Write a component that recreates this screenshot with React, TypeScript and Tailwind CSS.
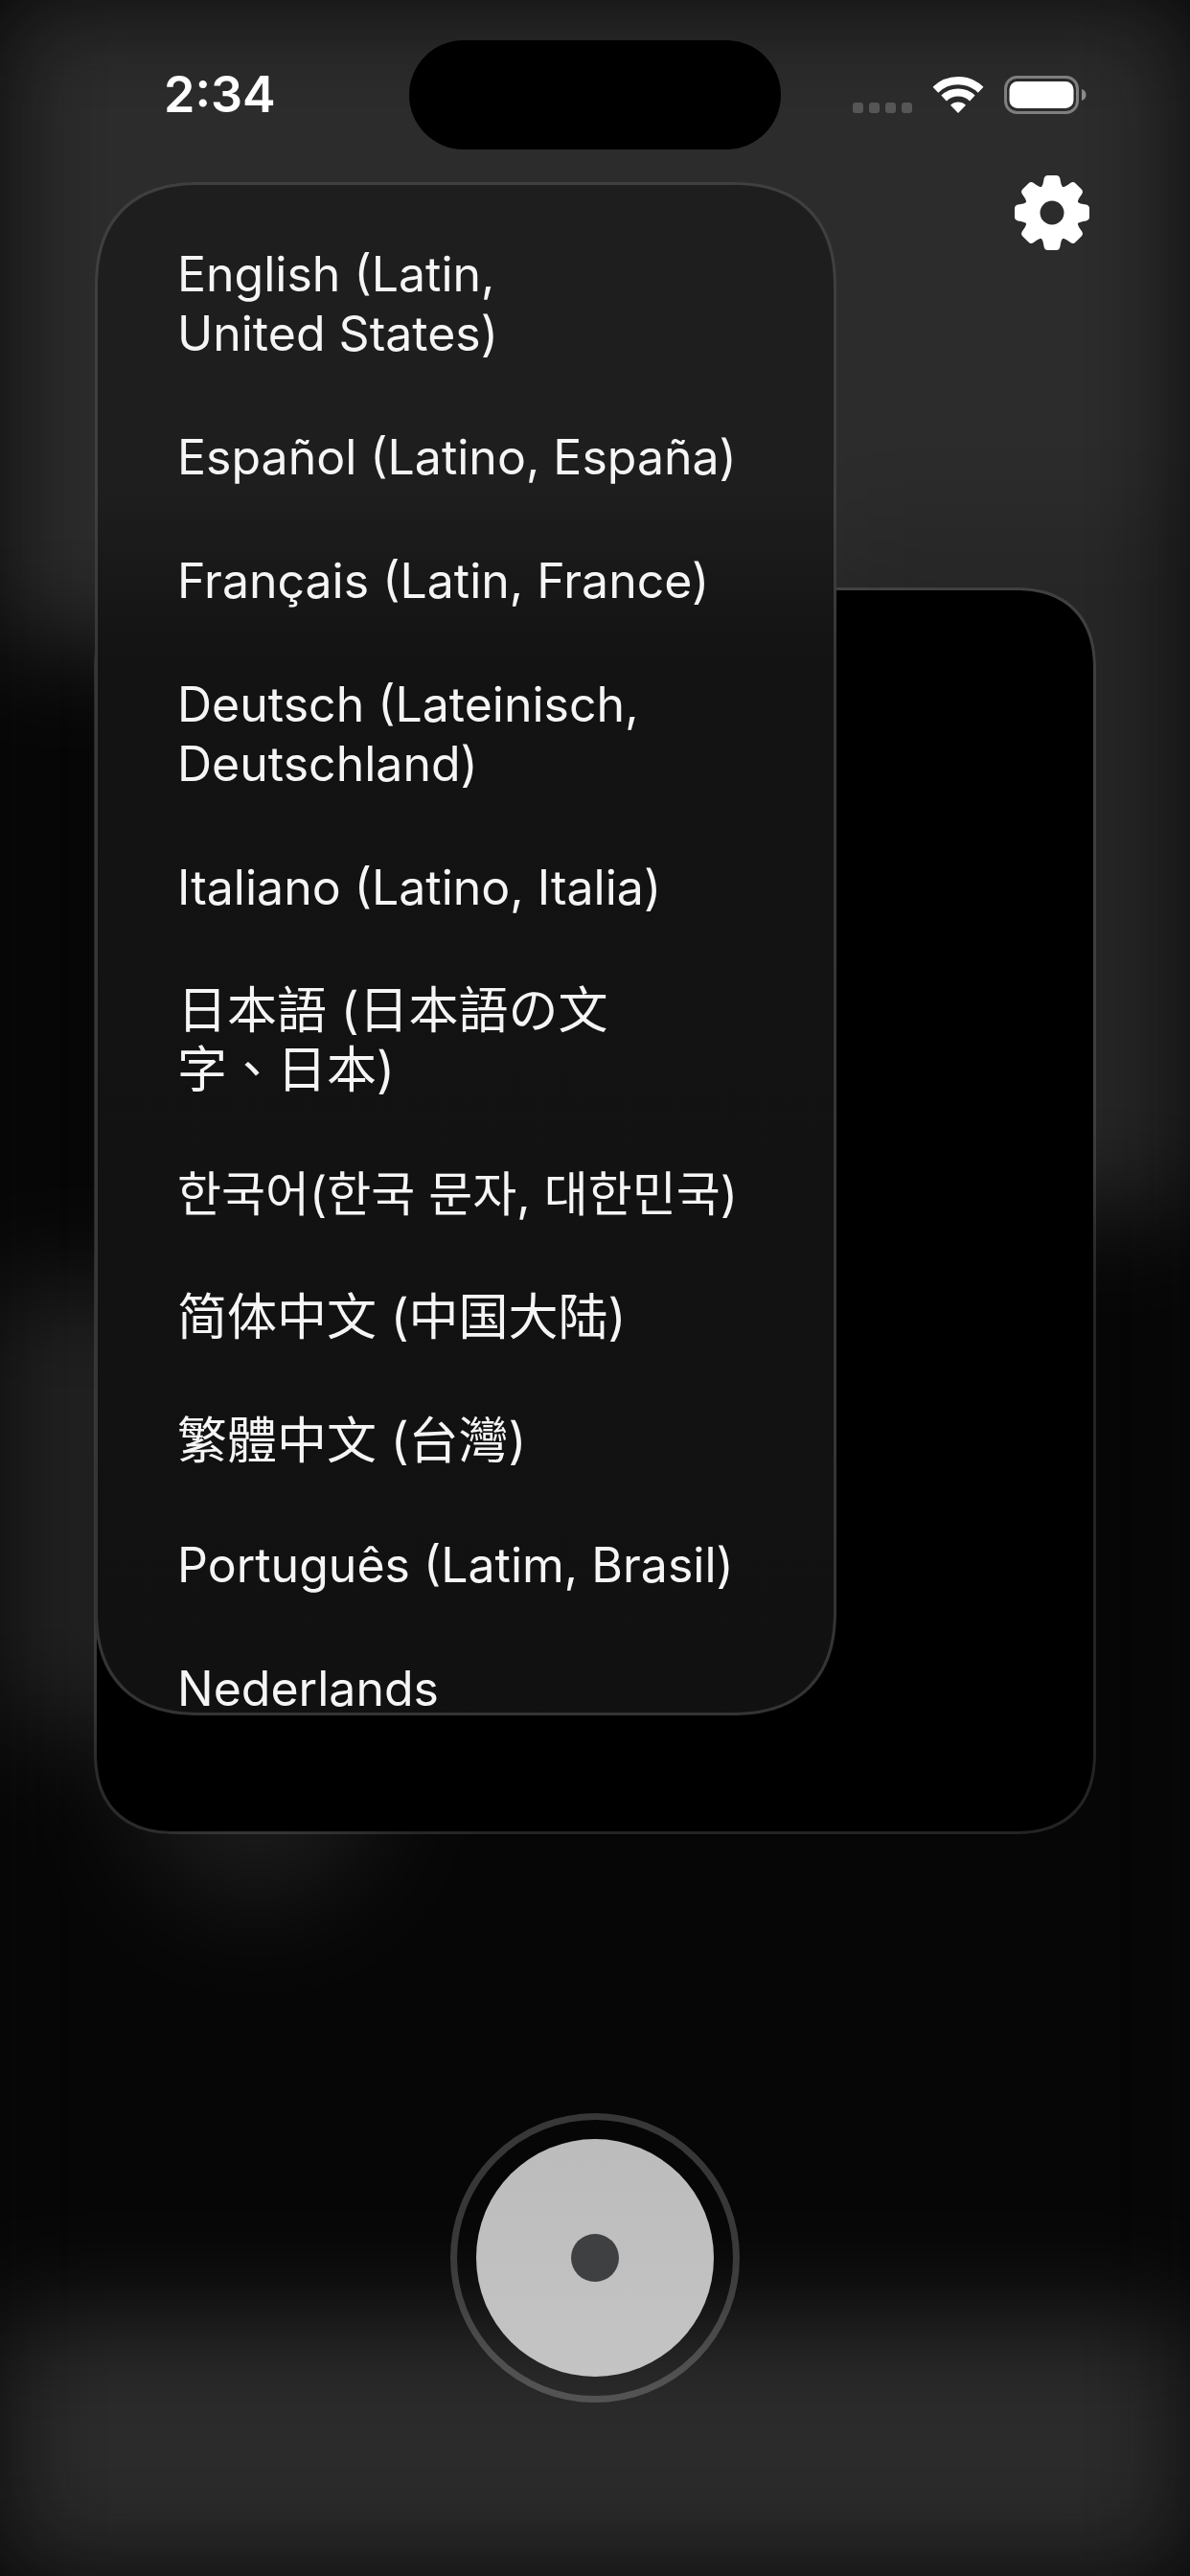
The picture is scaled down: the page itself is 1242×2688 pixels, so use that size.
import { useState } from 'react';

const languages = [
  { code: 'en-US', label: 'English (Latin,\nUnited States)' },
  { code: 'es-ES', label: 'Español (Latino, España)' },
  { code: 'fr-FR', label: 'Français (Latin, France)' },
  { code: 'de-DE', label: 'Deutsch (Lateinisch,\nDeutschland)' },
  { code: 'it-IT', label: 'Italiano (Latino, Italia)' },
  { code: 'ja-JP', label: '日本語 (日本語の文\n字、日本)', han: true },
  { code: 'ko-KR', label: '한국어(한국 문자, 대한민국)' },
  { code: 'zh-CN', label: '简体中文 (中国大陆)', han: true },
  { code: 'zh-TW', label: '繁體中文 (台灣)', han: true },
  { code: 'pt-BR', label: 'Português (Latim, Brasil)' },
  { code: 'nl-NL', label: 'Nederlands' },
];

const teeth = [0, 45, 90, 135, 180, 225, 270, 315];

function GearIcon() {
  return (
    <svg viewBox="-39 -39 78 78" className="size-[78px]" fill="white" aria-hidden="true">
      <circle r="20.7" fill="none" stroke="white" strokeWidth="16.4" />
      {teeth.map((angle) => (
        <path
          key={angle}
          transform={`rotate(${angle})`}
          d="M-12 -26 C-9.5 -28 -9.2 -31 -8.4 -35.5 Q-7.6 -39 -4.5 -39 H4.5 Q7.6 -39 8.4 -35.5 C9.2 -31 9.5 -28 12 -26 Z"
        />
      ))}
    </svg>
  );
}

function WifiIcon() {
  return (
    <svg viewBox="-27 -39 54 40" className="h-10 w-[54px]" aria-hidden="true">
      <g fill="none" stroke="white">
        <path d="M-23.6 -24.3 A33.9 33.9 0 0 1 23.6 -24.3" strokeWidth="8.2" />
        <path d="M-14.9 -15.5 A21.5 21.5 0 0 1 14.9 -15.5" strokeWidth="8" />
      </g>
      <path d="M0 0 L-8 -8.3 A11.8 11.8 0 0 1 8 -8.3 Z" fill="white" />
    </svg>
  );
}

function BatteryIcon() {
  return (
    <svg viewBox="0 0 86 40" className="h-10 w-[86px]" aria-hidden="true">
      <rect x="1.5" y="1.5" width="75" height="37" rx="12" fill="none" stroke="#7f7f7f" strokeWidth="3" />
      <rect x="5.5" y="6" width="67" height="28" rx="8.5" fill="white" />
      <path d="M81 14 Q85.500 15.500 85.500 20 Q85.500 24.500 81 26 Z" fill="#8a8a8a" />
    </svg>
  );
}

function StatusBar() {
  return (
    <header className="grid grid-cols-[1fr_388px_1fr] items-center pt-[42px]">
      <time className="pl-[171px] text-[52px] leading-[62px] font-semibold">2:34</time>
      <div className="h-[114px] rounded-full bg-black" />
      <div className="flex items-center justify-end pr-[108px]">
        <div className="mt-[26px] mr-[21px] flex gap-[6px]">
          <span className="size-[11px] rounded-[3px] bg-[#565656]" />
          <span className="size-[11px] rounded-[3px] bg-[#565656]" />
          <span className="size-[11px] rounded-[3px] bg-[#565656]" />
          <span className="size-[11px] rounded-[3px] bg-[#565656]" />
        </div>
        <WifiIcon />
        <div className="w-[21px]" />
        <BatteryIcon />
      </div>
    </header>
  );
}

// soft light behind the viewfinder, fades out towards the screen edges
function Backdrop() {
  return (
    <div className="absolute inset-0 overflow-hidden" aria-hidden="true">
      <div className="relative h-full bg-[#060606] blur-[55px]">
        <div className="absolute inset-x-0 top-0 h-[25%] bg-[#2c2c2c]" />
        <div className="absolute top-[20%] right-0 h-[27%] w-[30%] bg-[#262626]" />
        <div className="absolute top-[50%] left-0 h-[17%] w-[14%] bg-[#222222]" />
        <div className="absolute top-[63%] left-[11%] h-[11%] w-[21%] rounded-full bg-[#1b1b1b]" />
        <div className="absolute inset-x-0 bottom-0 h-[10%] bg-[#2b2b2b]" />
      </div>
    </div>
  );
}

export default function App() {
  const [selected, setSelected] = useState('en-US');
  const [recording, setRecording] = useState(false);

  return (
    <div className="relative min-h-screen bg-[#080808] text-white font-[Inter,'Noto_Sans_CJK_TC',sans-serif]">
      <Backdrop />
      <div className="relative flex min-h-screen flex-col">
        <StatusBar />
        <div className="relative z-10 mx-[98px] flex justify-end pt-5">
          <ul className="absolute top-[34px] left-px flex max-h-[1600px] w-[74%] flex-col gap-[67px] overflow-x-hidden overflow-y-auto rounded-[110px] border-[3px] border-white/15 bg-linear-to-b from-[#1e1e1e] from-20% via-[#131313] via-31% to-[#111111] bg-origin-border pt-[62px] pl-[83px] [corner-shape:superellipse(1.25)] [scrollbar-width:none]">
            {languages.map((language) => (
              <li key={language.code} lang={language.code}>
                <button
                  onClick={() => setSelected(language.code)}
                  aria-pressed={selected === language.code}
                  className={`block cursor-pointer text-left leading-[62px] whitespace-pre text-[#f5f5f5] ${
                    language.han ? "text-[52px] [font-feature-settings:'locl'_0]" : 'text-[50px]'
                  }`}
                >
                  {language.label}
                </button>
              </li>
            ))}
          </ul>
          <button aria-label="Settings" className="cursor-pointer p-[7px]">
            <GearIcon />
          </button>
        </div>
        <main className="mx-[98px] mt-[345px] flex-1 rounded-[86px] border-[3px] border-white/12 bg-black bg-clip-padding [corner-shape:superellipse(1.25)]" />
        <footer className="flex justify-center pt-[291px] pb-[181px]">
          <button
            aria-label="Record"
            aria-pressed={recording}
            onClick={() => setRecording(!recording)}
            className="flex size-[302px] cursor-pointer items-center justify-center rounded-full border-[7px] border-white/20"
          >
            <span className="flex size-[248px] items-center justify-center rounded-full bg-linear-to-b from-[#bcbcbc] to-[#c4c4c4]">
              <span className="size-[50px] rounded-full bg-[#3f4042]" />
            </span>
          </button>
        </footer>
      </div>
    </div>
  );
}
